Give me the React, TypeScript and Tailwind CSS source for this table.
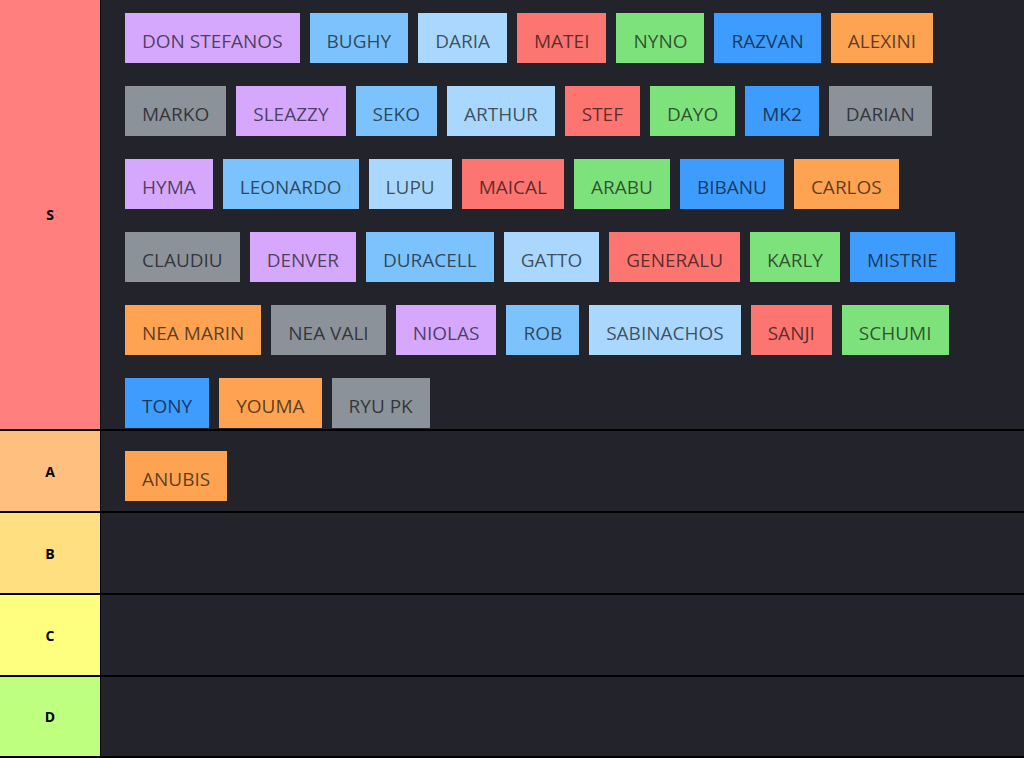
const C: Record<string, string> = {
  p: "bg-[#d5a8fe]",
  lb: "bg-[#7cc3fd]",
  xb: "bg-[#a9d7fd]",
  r: "bg-[#fd7571]",
  g: "bg-[#7ee27c]",
  b: "bg-[#3d9cfd]",
  o: "bg-[#fea352]",
  gr: "bg-[#8b9299]",
};

type Chip = [string, string];

const sRows: Chip[][] = [
  [["DON STEFANOS", "p"], ["BUGHY", "lb"], ["DARIA", "xb"], ["MATEI", "r"], ["NYNO", "g"], ["RAZVAN", "b"], ["ALEXINI", "o"]],
  [["MARKO", "gr"], ["SLEAZZY", "p"], ["SEKO", "lb"], ["ARTHUR", "xb"], ["STEF", "r"], ["DAYO", "g"], ["MK2", "b"], ["DARIAN", "gr"]],
  [["HYMA", "p"], ["LEONARDO", "lb"], ["LUPU", "xb"], ["MAICAL", "r"], ["ARABU", "g"], ["BIBANU", "b"], ["CARLOS", "o"]],
  [["CLAUDIU", "gr"], ["DENVER", "p"], ["DURACELL", "lb"], ["GATTO", "xb"], ["GENERALU", "r"], ["KARLY", "g"], ["MISTRIE", "b"]],
  [["NEA MARIN", "o"], ["NEA VALI", "gr"], ["NIOLAS", "p"], ["ROB", "lb"], ["SABINACHOS", "xb"], ["SANJI", "r"], ["SCHUMI", "g"]],
  [["TONY", "b"], ["YOUMA", "o"], ["RYU PK", "gr"]],
];

function ChipRow({ chips }: { chips: Chip[] }) {
  return (
    <div className="flex gap-x-[10px]">
      {chips.map(([name, c]) => (
        <div
          key={name}
          className={`${C[c]} h-[50px] px-[17px] pt-[6px] flex items-center text-[19px] text-black/65 whitespace-nowrap`}
        >
          {name}
        </div>
      ))}
    </div>
  );
}

function Tier({
  label,
  color,
  height,
  children,
}: {
  label: string;
  color: string;
  height: string;
  children?: React.ReactNode;
}) {
  return (
    <div className={`flex ${height} border-b-2 border-black`}>
      <div className={`${color} w-[100px] shrink-0 flex items-center justify-center text-[14px] font-bold text-black`}>
        {label}
      </div>
      <div className="flex-1 bg-[#23242b] border-l border-black">{children}</div>
    </div>
  );
}

export default function App() {
  return (
    <div
      className="w-[1024px] h-[758px] bg-black overflow-hidden"
      style={{ fontFamily: '"Open Sans", "Noto Sans", sans-serif' }}
    >
      <Tier label="S" color="bg-[#ff7f7f]" height="h-[431px]">
        <div className="flex flex-col gap-y-[23px] pl-[24px] pt-[13px]">
          {sRows.map((row, i) => (
            <ChipRow key={i} chips={row} />
          ))}
        </div>
      </Tier>
      <Tier label="A" color="bg-[#ffbf7f]" height="h-[82px]">
        <div className="pl-[24px] pt-[20px]">
          <ChipRow chips={[["ANUBIS", "o"]]} />
        </div>
      </Tier>
      <Tier label="B" color="bg-[#ffdf7f]" height="h-[82px]" />
      <Tier label="C" color="bg-[#ffff7f]" height="h-[82px]" />
      <Tier label="D" color="bg-[#bfff7f]" height="h-[81px]" />
    </div>
  );
}
